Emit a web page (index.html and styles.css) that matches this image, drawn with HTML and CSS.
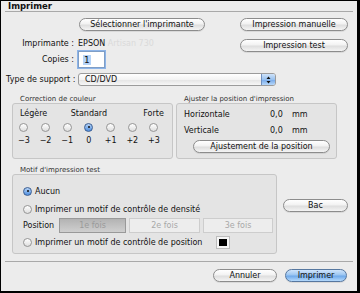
FILE: index.html
```html
<!DOCTYPE html>
<html lang="fr">
<head>
    <meta charset="UTF-8">
    <title>Imprimer</title>
    <link rel="stylesheet" href="styles.css">
</head>
<body>
    <div class="window">
        <div class="titlebar">Imprimer</div>

        <div class="top">
            <div class="top_left">
                <div class="row_select">
                    <button class="btn btn_select">Sélectionner l'imprimante</button>
                </div>
                <div class="row row_printer">
                    <span class="label">Imprimante :</span>
                    <span class="printer">EPSON <span class="faded">Artisan 730</span></span>
                </div>
                <div class="row row_copies">
                    <span class="label">Copies :</span>
                    <span class="input"><span class="sel">1</span></span>
                </div>
            </div>
            <div class="top_right">
                <button class="btn btn_side">Impression manuelle</button>
                <button class="btn btn_side">Impression test</button>
            </div>
        </div>

        <div class="row row_support">
            <span class="label_support">Type de support :</span>
            <div class="popup">
                <span>CD/DVD</span>
                <span class="popup_cap">
                    <svg width="5" height="8" viewBox="0 0 5 8"><path d="M2.5 0.5 L4.5 3 L0.5 3 Z M2.5 7.5 L4.5 5 L0.5 5 Z" fill="#111"/></svg>
                </span>
            </div>
        </div>

        <div class="groups">
            <div class="group group_color">
                <div class="group_title">Correction de couleur</div>
                <div class="box">
                    <div class="scale scale_labels">
                        <span class="lbl_low">Légère</span>
                        <span class="lbl_mid">Standard</span>
                        <span class="lbl_high">Forte</span>
                    </div>
                    <div class="scale">
                        <span class="cell"><span class="radio"></span></span>
                        <span class="cell"><span class="radio"></span></span>
                        <span class="cell"><span class="radio"></span></span>
                        <span class="cell"><span class="radio on"></span></span>
                        <span class="cell"><span class="radio"></span></span>
                        <span class="cell"><span class="radio"></span></span>
                        <span class="cell"><span class="radio"></span></span>
                    </div>
                    <div class="scale scale_nums">
                        <span class="cell">−3</span>
                        <span class="cell">−2</span>
                        <span class="cell">−1</span>
                        <span class="cell">0</span>
                        <span class="cell">+1</span>
                        <span class="cell">+2</span>
                        <span class="cell">+3</span>
                    </div>
                </div>
            </div>
            <div class="group group_pos">
                <div class="group_title">Ajuster la position d'impression</div>
                <div class="box">
                    <div class="pos_row">
                        <span class="pos_label">Horizontale</span>
                        <span class="pos_val">0,0</span>
                        <span class="pos_unit">mm</span>
                    </div>
                    <div class="pos_row">
                        <span class="pos_label">Verticale</span>
                        <span class="pos_val">0,0</span>
                        <span class="pos_unit">mm</span>
                    </div>
                    <button class="btn btn_adjust">Ajustement de la position</button>
                </div>
            </div>
        </div>

        <div class="bottom">
            <div class="group group_test">
                <div class="group_title">Motif d'impression test</div>
                <div class="box">
                    <div class="opt">
                        <span class="radio on"></span>
                        <span>Aucun</span>
                    </div>
                    <div class="opt">
                        <span class="radio"></span>
                        <span>Imprimer un motif de contrôle de densité</span>
                    </div>
                    <div class="seg_row">
                        <span class="seg_label">Position</span>
                        <div class="segments">
                            <span class="seg pressed">1e fois</span>
                            <span class="seg seg2">2e fois</span>
                            <span class="seg">3e fois</span>
                        </div>
                    </div>
                    <div class="opt opt_last">
                        <span class="radio"></span>
                        <span>Imprimer un motif de contrôle de position</span>
                        <span class="swatch"></span>
                    </div>
                </div>
            </div>
            <button class="btn btn_bac">Bac</button>
        </div>

        <div class="footer">
            <button class="btn btn_cancel">Annuler</button>
            <button class="btn btn_default">Imprimer</button>
        </div>
    </div>
</body>
</html>
```

FILE: styles.css
```css
body {
    margin: 0;
    width: 360px;
    height: 293px;
    background: #000;
    font-family: "DejaVu Sans", sans-serif;
    font-size: 8px;
    color: #111;
    overflow: hidden;
}

.window {
    margin: 1px 0 0 1px;
    width: 356px;
    height: 290px;
    background: #ececec;
}

.titlebar {
    margin: 0 4px;
    padding-left: 3px;
    height: 10px;
    line-height: 11px;
    font-weight: bold;
    font-size: 8.5px;
    border-bottom: 1px solid #a9a9a9;
}

/* buttons */
.btn {
    display: flex;
    align-items: center;
    justify-content: center;
    box-sizing: border-box;
    height: 13px;
    padding: 0;
    font-family: inherit;
    font-size: 8px;
    color: #111;
    white-space: nowrap;
    border: 1px solid #8c8c8c;
    border-radius: 7px;
    background: linear-gradient(#ffffff 0%, #f2f2f2 45%, #dedede 55%, #f4f4f4 100%);
    box-shadow: 0 1px 0 rgba(0, 0, 0, 0.08);
}

.btn_default {
    border-color: #56779f;
    background: linear-gradient(#cfe4fb 0%, #9cc6f1 45%, #6fa9ea 55%, #b4d9fb 100%);
}

/* top area */
.top {
    display: flex;
    padding-top: 6px;
}

.top_left {
    width: 236px;
}

.row_select {
    padding-left: 78px;
}

.btn_select {
    width: 126px;
}

.row {
    display: flex;
    align-items: center;
    white-space: nowrap;
}

.row .label {
    width: 77px;
    padding-right: 4px;
    box-sizing: border-box;
    text-align: right;
}

.row_printer {
    margin-top: 7px;
    height: 11px;
}

.faded {
    color: #dadada;
}

.row_copies {
    margin-top: 2px;
}

.input {
    display: flex;
    align-items: center;
    box-sizing: border-box;
    width: 27px;
    height: 17px;
    padding-left: 4px;
    background: #fff;
    border: 1px solid #7f9ec6;
    box-shadow: 0 0 0 1px #8db4e8;
}

.input .sel {
    background: #b4d3f8;
    padding: 0 1px;
    font-size: 9px;
}

.top_right {
    display: flex;
    flex-direction: column;
    gap: 8px;
    margin-left: 3px;
}

.btn_side {
    width: 108px;
}

/* support */
.row_support {
    margin-top: 5px;
}

.label_support {
    width: 77px;
    padding-left: 5px;
    box-sizing: border-box;
}

.popup {
    display: flex;
    align-items: center;
    box-sizing: border-box;
    width: 198px;
    height: 13px;
    padding-left: 6px;
    border: 1px solid #9b9b9b;
    border-radius: 3px;
    background: linear-gradient(#ffffff 0%, #f3f3f3 50%, #e3e3e3 51%, #f6f6f6 100%);
}

.popup span:first-child {
    flex: 1;
}

.popup_cap {
    display: flex;
    align-items: center;
    justify-content: center;
    width: 13px;
    height: 11px;
    border-left: 1px solid #6f8fbf;
    border-radius: 0 2px 2px 0;
    background: linear-gradient(#cfe3fa 0%, #98c1ef 50%, #74a8ea 51%, #b7d7f9 100%);
}

/* groups */
.groups {
    display: flex;
    gap: 3px;
    margin-top: 10px;
    padding-left: 11px;
}

.group_title {
    font-size: 7px;
    color: #333;
    height: 7px;
    line-height: 7px;
    padding-left: 8px;
}

.box {
    box-sizing: border-box;
    border: 1px solid #c6c6c6;
    border-radius: 3px;
    background: #e4e4e4;
}

.group_color .box {
    width: 161px;
    height: 56px;
}

.group_pos .box {
    width: 161px;
    height: 56px;
    padding: 2px 0 0 7px;
}

.scale {
    display: grid;
    grid-template-columns: repeat(7, 21.7px);
    height: 14px;
    align-items: center;
}

.scale_labels {
    margin-top: 3px;
    height: 13px;
}

.lbl_low {
    grid-column: 1 / 3;
    padding-left: 7px;
}

.lbl_mid {
    grid-column: 3 / 6;
    text-align: center;
}

.lbl_high {
    grid-column: 6 / 8;
    text-align: right;
    padding-right: 1px;
}

.cell {
    display: flex;
    justify-content: center;
}

.scale_nums {
    height: 12px;
}

/* radios */
.radio {
    position: relative;
    display: inline-block;
    box-sizing: border-box;
    width: 9px;
    height: 9px;
    border-radius: 50%;
    border: 1px solid #959595;
    background: linear-gradient(#ffffff, #dedede);
    flex-shrink: 0;
}

.radio.on {
    border-color: #3b5e92;
    background: linear-gradient(#b6d3f5, #4f8fe0);
}

.radio.on::after {
    content: "";
    position: absolute;
    left: 2.5px;
    top: 2.5px;
    width: 2px;
    height: 2px;
    border-radius: 50%;
    background: #111;
}

/* position */
.pos_row {
    display: flex;
    align-items: center;
    height: 16px;
}

.pos_label {
    width: 86px;
}

.pos_val {
    width: 22px;
}

.btn_adjust {
    width: 137px;
    margin: 2px 0 0 9px;
}

/* bottom */
.bottom {
    display: flex;
    align-items: flex-start;
    margin-top: 8px;
    padding-left: 11px;
}

.group_test .box {
    width: 265px;
    height: 80px;
    padding: 10px 0 0 10px;
}

.opt {
    display: flex;
    align-items: center;
    gap: 3px;
    height: 12px;
}

.opt + .opt {
    margin-top: 6px;
}

.seg_row {
    display: flex;
    align-items: center;
    margin-top: 3px;
}

.seg_label {
    width: 36px;
}

.segments {
    display: flex;
    gap: 3px;
}

.seg {
    display: flex;
    align-items: center;
    justify-content: center;
    box-sizing: border-box;
    width: 70px;
    height: 15px;
    color: #a8a8a8;
    border: 1px solid #cdcdcd;
    background: #ededed;
}

.seg.pressed {
    width: 67px;
    border-color: #999;
    background: linear-gradient(#b3b3b3, #cfcfcf);
    color: #9a9a9a;
}

.seg2 {
    width: 71px;
}

.opt.opt_last {
    margin-top: 3px;
}

.swatch {
    box-sizing: border-box;
    width: 12px;
    height: 11px;
    margin-left: 12px;
    border: 2px solid #f6f6f6;
    outline: 1px solid #bdbdbd;
    background: #000;
}

.btn_bac {
    width: 65px;
    margin: 32px 0 0 6px;
}

/* footer */
.footer {
    display: flex;
    justify-content: flex-end;
    gap: 8px;
    margin: 7px 4px 0;
    padding: 7px 6px 0 0;
    border-top: 1px solid #a9a9a9;
}

.btn_cancel {
    width: 64px;
}

.btn_default {
    width: 62px;
}
```
